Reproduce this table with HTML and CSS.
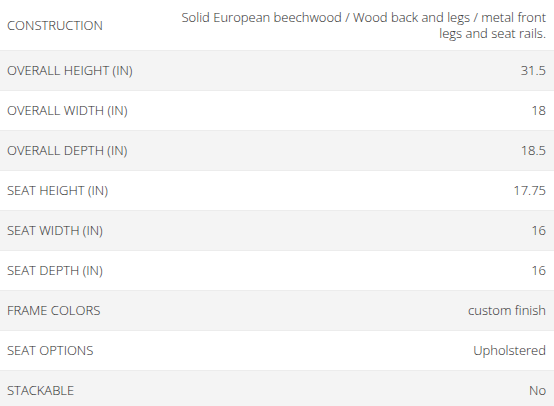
FILE: index.html
```html
<!DOCTYPE html>
<html>
<head>
<meta charset="utf-8">
<link rel="stylesheet" href="styles.css">
</head>
<body>
<table class="specs">
  <tr><td class="label">CONSTRUCTION</td><td class="value">Solid European beechwood / Wood back and legs / metal front legs and seat rails.</td></tr>
  <tr><td class="label">OVERALL HEIGHT (IN)</td><td class="value">31.5</td></tr>
  <tr><td class="label">OVERALL WIDTH (IN)</td><td class="value">18</td></tr>
  <tr><td class="label">OVERALL DEPTH (IN)</td><td class="value">18.5</td></tr>
  <tr><td class="label">SEAT HEIGHT (IN)</td><td class="value">17.75</td></tr>
  <tr><td class="label">SEAT WIDTH (IN)</td><td class="value">16</td></tr>
  <tr><td class="label">SEAT DEPTH (IN)</td><td class="value">16</td></tr>
  <tr><td class="label">FRAME COLORS</td><td class="value">custom finish</td></tr>
  <tr><td class="label">SEAT OPTIONS</td><td class="value">Upholstered</td></tr>
  <tr><td class="label">STACKABLE</td><td class="value">No</td></tr>
</table>
</body>
</html>
```
FILE: styles.css
```css
html, body {
  margin: 0;
  padding: 0;
  background: #fff;
}
.specs {
  width: 554px;
  border-collapse: collapse;
  font-family: "Open Sans", sans-serif;
  font-weight: 300;
  font-size: 13px;
  line-height: 16px;
  color: #2b2b2b;
}
.specs tr {
  height: 40px;
  border-top: 1px solid #ececec;
}
.specs tr:first-child {
  border-top: none;
  height: 50px;
}
.specs tr:nth-child(even) {
  background: #f4f4f4;
}
.specs td {
  padding: 8px 8px 8px 7px;
  vertical-align: middle;
}
.specs .label {
  width: 30%;
  text-align: left;
}
.specs .value {
  text-align: right;
  padding-right: 8px;
}
```
